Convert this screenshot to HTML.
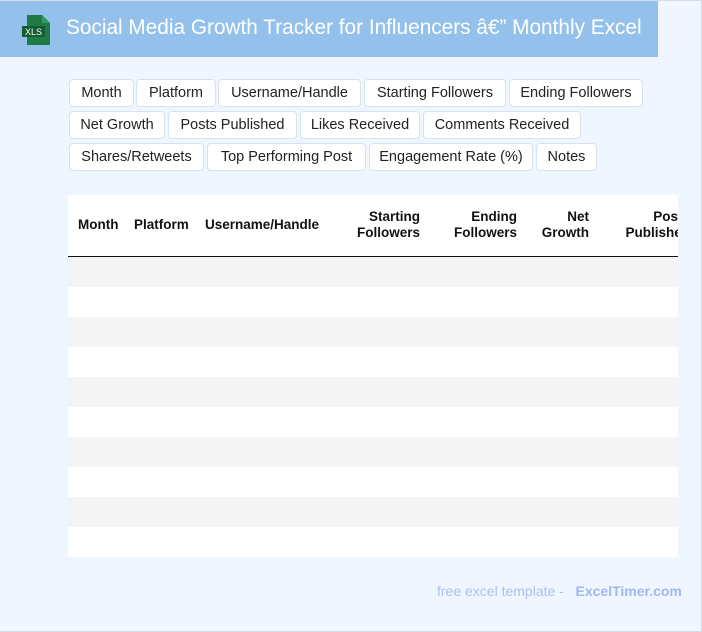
<!DOCTYPE html>
<html><head><meta charset="utf-8"><style>
*{margin:0;padding:0;box-sizing:border-box}
body{width:702px;height:632px;background:#f0f6ff;position:relative;overflow:hidden;font-family:"Liberation Sans",sans-serif}
.frame{position:absolute;left:0;top:0;width:702px;height:632px;border:1px solid #d6dde6;border-left:none}
.hdr{position:absolute;left:0;top:1px;width:658px;height:56px;background:#93c1ec}
.hdr h1{position:absolute;left:66px;top:15px;font-size:20.8px;font-weight:normal;color:#fff;white-space:nowrap}
.tag{position:absolute;height:28px;background:#fff;border:1px solid #d9e2ec;border-radius:4px;font-size:14.5px;color:#222;line-height:26px;text-align:center;white-space:nowrap}
.tbl{position:absolute;left:68px;top:195px;width:610px;height:362px;background:#fff;overflow:hidden}
.th{position:absolute;font-size:13.5px;font-weight:bold;color:#111;line-height:16px;white-space:nowrap}
.line{position:absolute;left:0;top:61px;width:610px;height:1px;background:#111}
.row{position:absolute;left:0;width:610px;height:30px}
.foot{position:absolute;top:583px;left:437px;font-size:14px;color:#a9c0ee;white-space:nowrap}
</style></head><body>
<div class="frame"></div>
<div class="hdr">
<svg style="position:absolute;left:21px;top:13px" width="30" height="32" viewBox="0 0 30 32">
<path d="M6 1h15l8 8v22H6z" fill="#1e7b45"/><path d="M21 1v8h8z" fill="#2f9b5c"/>
<rect x="1" y="12" width="23" height="11" fill="#145c32"/>
<text x="12.5" y="21" font-size="9" fill="#fff" text-anchor="middle" font-family="Liberation Sans">XLS</text>
</svg>
<h1>Social Media Growth Tracker for Influencers â€” Monthly Excel</h1>
</div>
<div class="tag" style="left:69px;top:79px;width:65px">Month</div>
<div class="tag" style="left:136px;top:79px;width:80px">Platform</div>
<div class="tag" style="left:218px;top:79px;width:143px">Username/Handle</div>
<div class="tag" style="left:364px;top:79px;width:142px">Starting Followers</div>
<div class="tag" style="left:509px;top:79px;width:134px">Ending Followers</div>
<div class="tag" style="left:69px;top:111px;width:96px">Net Growth</div>
<div class="tag" style="left:168px;top:111px;width:129px">Posts Published</div>
<div class="tag" style="left:300px;top:111px;width:120px">Likes Received</div>
<div class="tag" style="left:423px;top:111px;width:158px">Comments Received</div>
<div class="tag" style="left:69px;top:143px;width:135px">Shares/Retweets</div>
<div class="tag" style="left:207px;top:143px;width:159px">Top Performing Post</div>
<div class="tag" style="left:369px;top:143px;width:164px">Engagement Rate (%)</div>
<div class="tag" style="left:536px;top:143px;width:61px">Notes</div>
<div class="tbl">
<div class="th" style="left:10px;top:22px">Month</div>
<div class="th" style="left:66px;top:22px">Platform</div>
<div class="th" style="left:137px;top:22px">Username/Handle</div>
<div class="th" style="right:258px;top:14px;text-align:right">Starting<br>Followers</div>
<div class="th" style="right:161px;top:14px;text-align:right">Ending<br>Followers</div>
<div class="th" style="right:89px;top:14px;text-align:right">Net<br>Growth</div>
<div class="th" style="left:544px;top:14px;text-align:right;width:78px">Posts<br>Published</div>
<div class="line"></div>
<div class="row" style="top:62px;background:#f4f4f4"></div>
<div class="row" style="top:122px;background:#f4f4f4"></div>
<div class="row" style="top:182px;background:#f4f4f4"></div>
<div class="row" style="top:242px;background:#f4f4f4"></div>
<div class="row" style="top:302px;background:#f4f4f4"></div>
</div>
<div class="foot">free excel template - &nbsp; <b style="color:#9fb8ee">ExcelTimer.com</b></div>
</body></html>
